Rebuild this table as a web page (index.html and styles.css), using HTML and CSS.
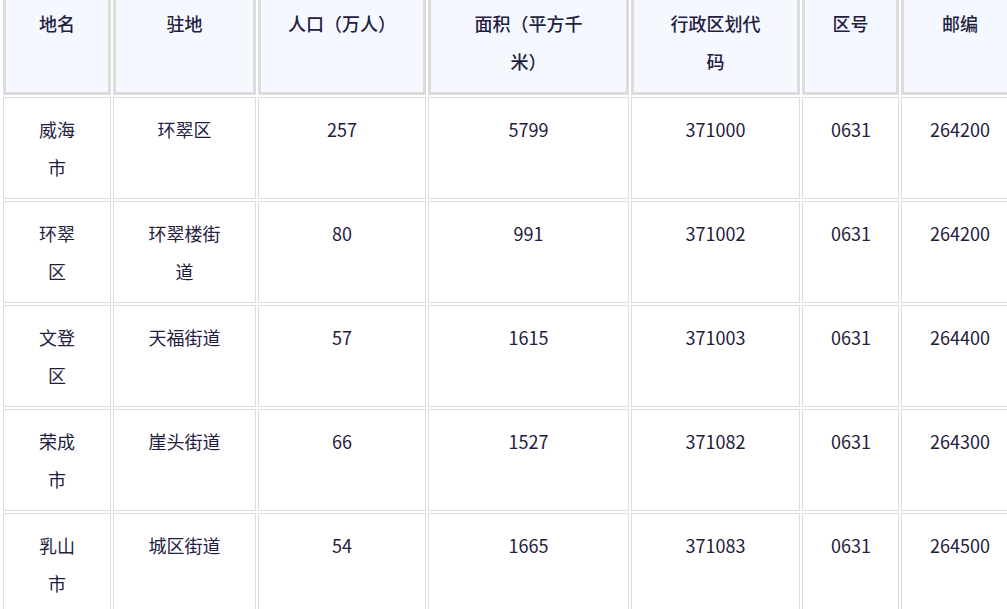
FILE: index.html
```html
<!DOCTYPE html>
<html lang="zh-CN">
<head>
<meta charset="utf-8">
<title>威海市行政区划</title>
<link rel="stylesheet" href="styles.css">
</head>
<body>
<table class="region-table">
  <colgroup>
    <col class="c1"><col class="c2"><col class="c3"><col class="c4"><col class="c5"><col class="c6"><col class="c7">
  </colgroup>
  <thead>
    <tr>
      <th>地名</th><th>驻地</th><th>人口（万人）</th><th>面积（平方千米）</th><th class="th-wide-pad">行政区划代码</th><th>区号</th><th>邮编</th>
    </tr>
  </thead>
  <tbody>
    <tr><td>威海市</td><td>环翠区</td><td>257</td><td>5799</td><td>371000</td><td>0631</td><td>264200</td></tr>
    <tr><td>环翠区</td><td>环翠楼街道</td><td>80</td><td>991</td><td>371002</td><td>0631</td><td>264200</td></tr>
    <tr><td>文登区</td><td>天福街道</td><td>57</td><td>1615</td><td>371003</td><td>0631</td><td>264400</td></tr>
    <tr><td>荣成市</td><td>崖头街道</td><td>66</td><td>1527</td><td>371082</td><td>0631</td><td>264300</td></tr>
    <tr><td>乳山市</td><td>城区街道</td><td>54</td><td>1665</td><td>371083</td><td>0631</td><td>264500</td></tr>
  </tbody>
</table>
</body>
</html>
```
FILE: styles.css
```css
html, body {
  margin: 0;
  padding: 0;
  background: #ffffff;
  overflow: hidden;
}

.region-table {
  margin: -13px 0 0 1px;
  border-collapse: separate;
  border-spacing: 2px;
  table-layout: fixed;
  width: 1020px;
  font-family: "Noto Sans CJK SC", "Noto Sans", sans-serif;
  font-size: 18px;
  line-height: 38px;
  color: #1f2040;
  text-align: center;
  text-spacing-trim: space-all;
}

.c1 { width: 108px; }
.c2 { width: 143px; }
.c3 { width: 168px; }
.c4 { width: 201px; }
.c5 { width: 169px; }
.c6 { width: 97px; }
.c7 { width: 118px; }

.region-table th {
  background: #f5f9ff;
  border: 3px solid #dcdcdc;
  padding: 12px 27px;
  font-weight: 500;
  vertical-align: top;
}

.region-table th.th-wide-pad {
  padding: 12px 28px;
}

.region-table td {
  border: 1px solid #dddddd;
  padding: 12px 28px;
  font-weight: 400;
  vertical-align: top;
  height: 76px;
}
```
